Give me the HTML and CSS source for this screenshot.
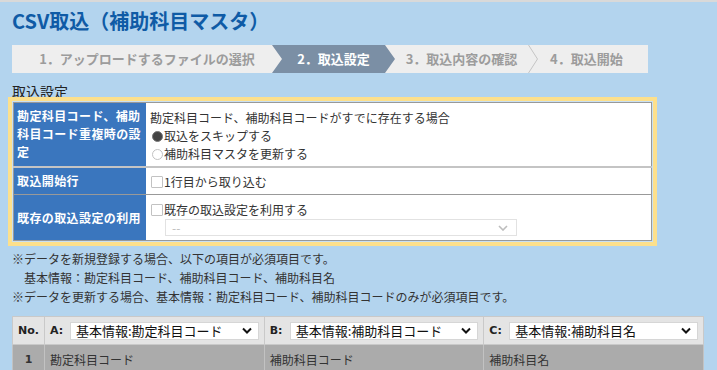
FILE: index.html
```html
<!DOCTYPE html>
<html lang="ja">
<head>
  <meta charset="UTF-8">
  <title>CSV取込（補助科目マスタ）</title>
  <link rel="stylesheet" href="styles.css">
</head>
<body>
<div class="page">

  <h1 class="title">CSV取込（補助科目マスタ）</h1>

  <ol class="steps">
    <li class="step step-first">1．アップロードするファイルの選択</li>
    <li class="step step-current">2．取込設定</li>
    <li class="step step-third">3．取込内容の確認</li>
    <li class="step-sep">
      <svg width="10" height="28" viewBox="0 0 10 28"><polyline points="0.5,0 9.5,14 0.5,28" fill="none" stroke="#c4c4c4" stroke-width="1"/></svg>
    </li>
    <li class="step step-last">4．取込開始</li>
  </ol>

  <h2 class="section-title">取込設定</h2>

  <div class="frame">
    <table class="settings">
      <tr class="row-dup">
        <th>勘定科目コード、補助科目コード重複時の設定</th>
        <td>
          <div>勘定科目コード、補助科目コードがすでに存在する場合</div>
          <label class="opt"><span class="radio checked"></span>取込をスキップする</label>
          <label class="opt"><span class="radio"></span>補助科目マスタを更新する</label>
        </td>
      </tr>
      <tr class="row-start">
        <th>取込開始行</th>
        <td><label class="opt"><span class="check"></span>1行目から取り込む</label></td>
      </tr>
      <tr class="row-reuse">
        <th>既存の取込設定の利用</th>
        <td>
          <label class="opt"><span class="check"></span>既存の取込設定を利用する</label>
          <div class="select select-disabled">
            <span>--</span>
            <svg width="10" height="6" viewBox="0 0 10 6"><polyline points="1,1 5,5 9,1" fill="none" stroke="#bdbdbd" stroke-width="1.6"/></svg>
          </div>
        </td>
      </tr>
    </table>
  </div>

  <div class="notes">
    <p>※データを新規登録する場合、以下の項目が必須項目です。</p>
    <p class="indent">基本情報：勘定科目コード、補助科目コード、補助科目名</p>
    <p>※データを更新する場合、基本情報：勘定科目コード、補助科目コードのみが必須項目です。</p>
  </div>

  <table class="mapping">
    <thead>
      <tr>
        <th class="col-no">No.</th>
        <th>
          <div class="head"><span class="letter">A:</span>
            <div class="select"><span>基本情報:勘定科目コード</span><svg width="10" height="7" viewBox="0 0 10 7"><polyline points="1,1.5 5,5.5 9,1.5" fill="none" stroke="#111" stroke-width="2"/></svg></div>
          </div>
        </th>
        <th>
          <div class="head"><span class="letter">B:</span>
            <div class="select"><span>基本情報:補助科目コード</span><svg width="10" height="7" viewBox="0 0 10 7"><polyline points="1,1.5 5,5.5 9,1.5" fill="none" stroke="#111" stroke-width="2"/></svg></div>
          </div>
        </th>
        <th>
          <div class="head"><span class="letter">C:</span>
            <div class="select"><span>基本情報:補助科目名</span><svg width="10" height="7" viewBox="0 0 10 7"><polyline points="1,1.5 5,5.5 9,1.5" fill="none" stroke="#111" stroke-width="2"/></svg></div>
          </div>
        </th>
      </tr>
    </thead>
    <tbody>
      <tr>
        <td class="col-no">1</td>
        <td>勘定科目コード</td>
        <td>補助科目コード</td>
        <td>補助科目名</td>
      </tr>
    </tbody>
  </table>

</div>
</body>
</html>
```

FILE: styles.css
```css
body { margin: 0; border-top: 2px solid #d9d9d9; background: #b3d4ee; color: #333; font-family: "Noto Sans CJK JP", sans-serif; font-size: 12px; }
.page { padding: 7px 12px 0; }

.title { margin: 0; font-size: 20px; line-height: 24px; font-weight: bold; color: #0f5ba6; }

/* steps bar */
.steps { list-style: none; margin: 12px 0 0; padding: 0; display: flex; width: 636px; height: 28px; background: #eeeeee; }
.step { line-height: 28px; font-size: 13px; font-weight: bold; color: #9c9c9c; text-align: center; box-sizing: border-box; }
.step-first { width: 260px; padding-left: 10px; }
.step-current { width: 123px; padding: 0 10px; background: #7b8fa5; color: #fff;
  clip-path: polygon(0 0, 113px 0, 100% 50%, 113px 100%, 0 100%, 10px 50%); }
.step-third { width: 133px; }
.step-sep svg { display: block; }
.step-last { padding-left: 12px; text-align: left; }

.section-title { margin: 10px 0 0; font-size: 14px; line-height: 16px; height: 14px; overflow: hidden; font-weight: normal; color: #222; }

/* settings block */
.frame { width: 649px; box-sizing: border-box; margin-left: -4px; border: 4px solid #fde08c; padding: 1px; background: #c8e0f3; }
.settings { width: 100%; border-collapse: collapse; background: #fff; border: 1px solid #999; }
.settings th { width: 125px; padding: 0 4px 0 3px; background: #3a76be; color: #fff; font-weight: bold; text-align: left; line-height: 18px; letter-spacing: 0.4px; border-bottom: 1px solid #999; }
.settings td { padding: 0 4px; line-height: 18px; vertical-align: top; border-bottom: 1px solid #999; }
.row-dup th, .row-dup td { border-bottom: 2px solid #c4c4c4; }
.row-dup td { height: 64px; box-sizing: border-box; padding-top: 6px; }
.row-start td { height: 28px; box-sizing: border-box; padding-top: 5px; }
.row-reuse td { height: 46px; box-sizing: border-box; padding-top: 6px; }
.opt { display: flex; align-items: center; }
.radio { width: 11px; height: 11px; margin: 0 1px 0 2px; border: 1px solid #c2c2c2; border-radius: 50%; background: #fff; box-sizing: border-box; }
.radio.checked { background: #444; border-color: #777; }
.check { width: 12px; height: 12px; margin: 0 1px 0 1px; border: 1px solid #c2c2c2; border-radius: 1px; background: #fff; box-sizing: border-box; }

.select { display: flex; align-items: center; justify-content: space-between; box-sizing: border-box; background: #fff; }
.select-disabled { width: 352px; height: 17px; margin-left: 15px; padding: 0 8px 0 6px; border: 1px solid #e2e2e2; color: #bbb; line-height: 15px; }

/* notes */
.notes { margin-top: 3px; line-height: 19px; }
.notes p { margin: 0; }
.notes .indent { padding-left: 12px; }

/* mapping table */
.mapping { margin-top: 10px; width: 692px; border-collapse: collapse; border: 1px solid #bdbdbd; table-layout: fixed; }
.mapping .col-no { width: 31px; text-align: center; font-family: "DejaVu Sans", sans-serif; font-weight: bold; font-size: 11px; padding: 0; }
.mapping th { height: 27px; padding: 0 5px; background: #e4e4e4; border: 1px solid #c9c9c9; color: #222; text-align: left; }
.mapping td { height: 28px; padding: 0 5px; background: #ababab; border: 1px solid #c2c2c2; color: #333; }
.head { display: flex; align-items: center; }
.letter { width: 20px; font-family: "DejaVu Sans", sans-serif; font-size: 11px; font-weight: bold; }
.head .select { width: 189px; height: 18px; padding: 0 6px 0 5px; border: 1px solid #d6d6d6; font-size: 13px; font-weight: normal; color: #111; }
```
